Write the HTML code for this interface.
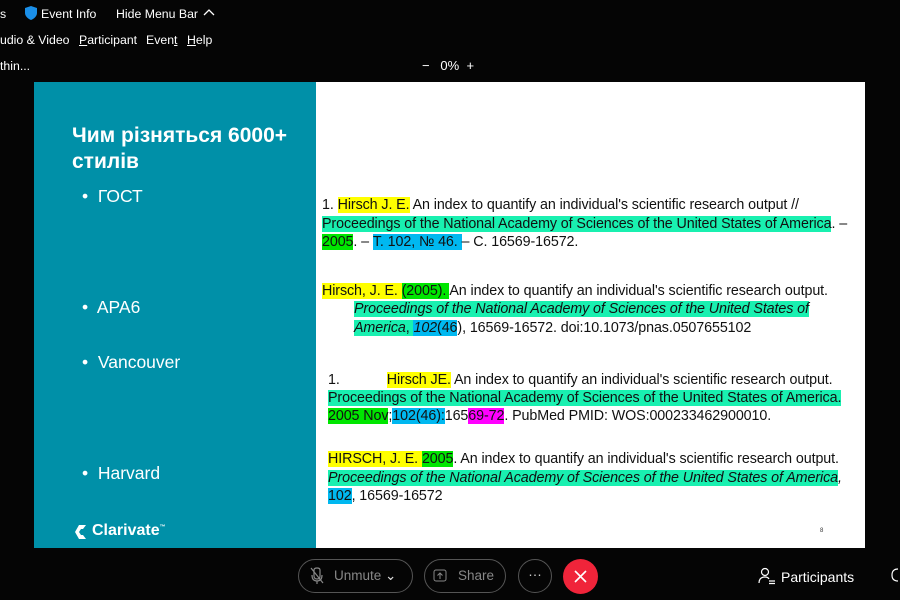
<!DOCTYPE html>
<html><head><meta charset="utf-8"><style>
body{margin:0;width:900px;height:600px;background:#050505;overflow:hidden;position:relative;font-family:"Liberation Sans",sans-serif;color:#fff}
.a{position:absolute;white-space:nowrap}
.m{font-size:12.3px;color:#fff}
.slide{position:absolute;left:34px;top:82px;width:282px;height:466px;background:#0090a8}
.white{position:absolute;left:316px;top:82px;width:549px;height:466px;background:#fff}
.c{position:absolute;white-space:nowrap;font-size:14.3px;color:#111;line-height:18px;letter-spacing:-0.1px}
.y{background:#ffff00}.g{background:#00e600}.t{background:#19f0b0}.b{background:#00b8f0}.p{background:#ff00ff}
.bl{font-size:17.5px;color:#fff}
.btn{position:absolute;border:1px solid #555;border-radius:19px;height:34px;top:559px;color:#888;font-size:13.5px;box-sizing:border-box}
</style></head><body>
<div class="a m" style="left:0;top:7px">s</div>
<svg class="a" style="left:25px;top:6px" width="12" height="14" viewBox="0 0 12 14"><path d="M6 0 L12 2 V7 C12 10 9 13 6 14 C3 13 0 10 0 7 V2Z" fill="#1a8fe8"/></svg>
<div class="a m" style="left:41px;top:7px">Event Info</div>
<div class="a m" style="left:116px;top:7px">Hide Menu Bar</div>
<svg class="a" style="left:203px;top:8px" width="12" height="8"><path d="M1 7 L6 2 L11 7" stroke="#fff" fill="none" stroke-width="1.3"/></svg>
<div class="a m" style="left:0;top:33px">udio &amp; Video</div>
<div class="a m" style="left:79px;top:33px"><u>P</u>articipant</div>
<div class="a m" style="left:146px;top:33px">Even<u>t</u></div>
<div class="a m" style="left:187px;top:33px"><u>H</u>elp</div>
<div class="a m" style="left:0;top:59px">thin...</div>
<div class="a m" style="left:422px;top:58px;font-size:13px">−&nbsp;&nbsp;&nbsp;0%&nbsp;&nbsp;+</div>
<div class="slide"></div><div class="white"></div>
<div class="a" style="left:72px;top:123px;font-size:21px;font-weight:bold;line-height:26px">Чим різняться 6000+<br>стилів</div>
<div class="a bl" style="left:82px;top:186px">•&nbsp; ГОСТ</div>
<div class="a bl" style="left:82px;top:297px">•&nbsp; APA6</div>
<div class="a bl" style="left:82px;top:352px">•&nbsp; Vancouver</div>
<div class="a bl" style="left:82px;top:463px">•&nbsp; Harvard</div>
<svg class="a" style="left:74px;top:524px" width="14" height="16" viewBox="0 0 14 16"><path d="M5 1 L12 1 L9 5 L7 5 L5 8 L7 11 L9 11 L12 15 L5 15 L1 8Z" fill="#fff"/></svg>
<div class="a" style="left:92px;top:522px;font-size:16px;font-weight:bold">Clarivate<sup style="font-size:6px">™</sup></div>
<div class="c" style="left:322px;top:196px">1. <span class="y">Hirsch J. E.</span> An index to quantify an individual's scientific research output //</div>
<div class="c" style="left:322px;top:215px"><span class="t">Proceedings of the National Academy of Sciences of the United States of America</span>. –</div>
<div class="c" style="left:322px;top:233px"><span class="g">2005</span>. – <span class="b">Т. 102, № 46. </span>– С. 16569-16572.</div>
<div class="c" style="left:322px;top:282px"><span class="y">Hirsch, J. E. </span><span class="g">(2005). </span>An index to quantify an individual's scientific research output.</div>
<div class="c" style="left:354px;top:300px;font-style:italic"><span class="t">Proceedings of the National Academy of Sciences of the United States of</span></div>
<div class="c" style="left:354px;top:319px"><span class="t"><i>America</i>, </span><span class="b"><i>102</i>(46</span>), 16569-16572. doi:10.1073/pnas.0507655102</div>
<div class="c" style="left:328px;top:371px">1.<span style="display:inline-block;width:47px"></span><span class="y">Hirsch JE.</span> An index to quantify an individual's scientific research output.</div>
<div class="c" style="left:328px;top:389px"><span class="t">Proceedings of the National Academy of Sciences of the United States of America.</span></div>
<div class="c" style="left:328px;top:407px"><span class="g">2005 Nov</span>;<span class="b">102(46):</span>165<span class="p">69-72</span>. PubMed PMID: WOS:000233462900010.</div>
<div class="c" style="left:328px;top:450px"><span class="y">HIRSCH, J. E. </span><span class="g">2005</span>. An index to quantify an individual's scientific research output.</div>
<div class="c" style="left:328px;top:469px;font-style:italic"><span class="t">Proceedings of the National Academy of Sciences of the United States of America</span>,</div>
<div class="c" style="left:328px;top:487px"><span class="b">102</span>, 16569-16572</div>
<div class="a" style="left:820px;top:528px;font-size:6px;color:#333">8</div>
<div class="btn" style="left:298px;width:115px;padding:8px 0 0 35px">Unmute <span style="color:#ddd">&#8964;</span></div>
<svg class="a" style="left:310px;top:567px" width="14" height="18"><path d="M4 3 Q4 1 7 1 Q10 1 10 3 V9 Q10 12 7 12 Q4 12 4 9Z M2 8 Q2 14 7 14 Q12 14 12 8 M7 14 V17 M1 1 L13 16" stroke="#888" fill="none" stroke-width="1.2"/></svg>
<div class="btn" style="left:424px;width:82px;padding:8px 0 0 33px">Share</div>
<svg class="a" style="left:433px;top:569px" width="14" height="13"><rect x="1" y="1" width="12" height="11" rx="2" stroke="#888" fill="none"/><path d="M7 10 V4 M4.5 6.5 L7 4 L9.5 6.5" stroke="#888" fill="none"/></svg>
<div class="btn" style="left:518px;width:34px;text-align:center;padding-top:7px;color:#ccc">···</div>
<div class="a" style="left:563px;top:559px;width:35px;height:35px;border-radius:50%;background:#f0243a"></div>
<svg class="a" style="left:573px;top:569px" width="15" height="15"><path d="M2 2 L13 13 M13 2 L2 13" stroke="#fff" stroke-width="1.6"/></svg>
<svg class="a" style="left:758px;top:567px" width="18" height="18"><circle cx="7" cy="5" r="3.5" stroke="#fff" fill="none" stroke-width="1.2"/><path d="M1 16 Q1 10 7 10 Q10 10 11 12 M11 14 H17 M11 16.5 H17" stroke="#fff" fill="none" stroke-width="1.2"/></svg>
<div class="a" style="left:781px;top:569px;font-size:14px">Participants</div>
<svg class="a" style="left:890px;top:567px" width="12" height="16"><path d="M8 2 Q2 2 2 8 Q2 14 8 14" stroke="#fff" fill="none" stroke-width="1.2"/></svg>
</body></html>
